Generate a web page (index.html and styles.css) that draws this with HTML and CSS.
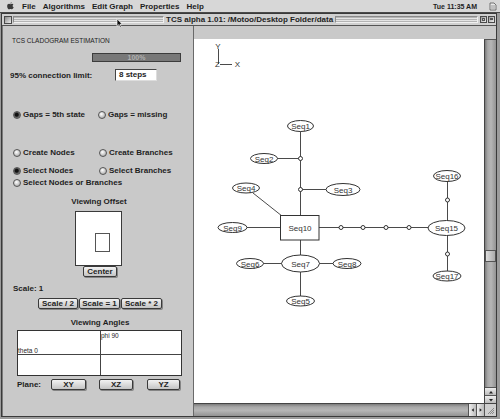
FILE: index.html
```html
<!DOCTYPE html>
<html>
<head>
<meta charset="utf-8">
<link rel="stylesheet" href="styles.css">
</head>
<body>
<div class="menubar">
  <svg class="apple" viewBox="0 0 10 12" width="7" height="8"><path d="M6.6 0.3c0 1-0.8 1.9-1.7 1.9-0.1-1 0.8-1.9 1.7-1.9z M5 3.2c0.8 0 1.4-0.5 2.3-0.5 0.8 0 1.7 0.4 2.1 1.2-1.8 1-1.5 3.5 0.3 4.1-0.4 1.2-1.4 3-2.5 3-0.9 0-1.1-0.5-2.2-0.5s-1.4 0.5-2.2 0.5C1.7 11 0 8.5 0 6.2 0 4.1 1.4 2.8 2.8 2.8c0.9 0 1.5 0.4 2.2 0.4z" fill="#3a3a3a"/></svg>
  <div class="menu">
    <span>File</span><span>Algorithms</span><span>Edit Graph</span><span>Properties</span><span>Help</span>
  </div>
  <span class="clock">Tue 11:35 AM</span>
  <svg class="appicon" viewBox="0 0 8 9" width="8" height="9"><path d="M1 1h4l2 2v5H1z" fill="#e8e8e8" stroke="#555" stroke-width="0.8"/><path d="M2 4h4M2 6h4" stroke="#777" stroke-width="0.7"/></svg>
</div>

<div class="window">
  <div class="titlebar">
    <span class="closebox"></span>
    <span class="stripes s1"></span>
    <span class="wtitle">TCS alpha 1.01: /Motoo/Desktop Folder/data</span>
    <span class="stripes s2"></span>
    <span class="tbox"><i></i></span>
    <span class="tbox shade"><i></i></span>
    <svg class="cursor" viewBox="0 0 8 12" width="7" height="10"><path d="M1 1v9l2.2-2 1.6 3.4 1.4-0.7-1.6-3.2H7.4z" fill="#111" stroke="#fff" stroke-width="0.8"/></svg>
  </div>
  <div class="content">
    <div class="panel">
      <div class="ptitle">TCS CLADOGRAM ESTIMATION</div>
      <div class="progress">100%</div>
      <div class="limit"><span class="lbl">95% connection limit:</span><span class="field">8 steps</span></div>
      <div class="radios c85 row1"><span class="opt"><i class="radio on"></i>Gaps = 5th state</span><span class="opt"><i class="radio"></i>Gaps = missing</span></div>
      <div class="radios c86 row2"><span class="opt"><i class="radio"></i>Create Nodes</span><span class="opt"><i class="radio"></i>Create Branches</span></div>
      <div class="radios c86 row3"><span class="opt"><i class="radio on"></i>Select Nodes</span><span class="opt"><i class="radio"></i>Select Branches</span></div>
      <div class="radios row4"><span class="opt"><i class="radio"></i>Select Nodes or Branches</span></div>
      <div class="label center offlbl">Viewing Offset</div>
      <div class="offset"><span class="offrect"></span></div>
      <div class="btn centerbtn">Center</div>
      <div class="label scalelbl">Scale: 1</div>
      <div class="scalerow"><span class="btn sb1">Scale / 2</span><span class="btn sb2">Scale = 1</span><span class="btn sb3">Scale * 2</span></div>
      <div class="label center anglelbl">Viewing Angles</div>
      <div class="angles">
        <div class="cell tl"><span class="theta">theta 0</span></div>
        <div class="cell tr"><span class="phi">phi 90</span></div>
        <div class="cell bl"></div>
        <div class="cell br"></div>
      </div>
      <div class="planerow"><span class="label plbl">Plane:</span><span class="btn pxy">XY</span><span class="btn pxz">XZ</span><span class="btn pyz">YZ</span></div>
    </div>
    <div class="view">
      <div class="viewtop"></div>
      <div class="viewmid">
        <div class="canvas">
          <svg class="graph" width="290" height="364" viewBox="0 0 290 364">
            <g stroke="#4a4a4a" stroke-width="1" fill="none">
              <line x1="24.5" y1="10" x2="24.5" y2="25"/>
              <line x1="26" y1="25.5" x2="38" y2="25.5"/>
              <line x1="106.5" y1="92" x2="106.5" y2="176"/>
              <line x1="83" y1="119.5" x2="106" y2="119.5"/>
              <line x1="106" y1="150.5" x2="132" y2="150.5"/>
              <line x1="59" y1="154" x2="88" y2="177"/>
              <line x1="52" y1="188.5" x2="86" y2="188.5"/>
              <line x1="125" y1="188.5" x2="234" y2="188.5"/>
              <line x1="106.5" y1="201" x2="106.5" y2="216"/>
              <line x1="69" y1="224.5" x2="88" y2="224.5"/>
              <line x1="125" y1="224.5" x2="139" y2="224.5"/>
              <line x1="106.5" y1="233" x2="106.5" y2="257"/>
              <line x1="253.5" y1="142" x2="253.5" y2="182"/>
              <line x1="253.5" y1="196" x2="253.5" y2="232"/>
            </g>
            <g stroke="#333" stroke-width="1" fill="#fff">
              <ellipse cx="106.5" cy="87" rx="13" ry="5.5"/>
              <ellipse cx="70" cy="119.5" rx="13.5" ry="5"/>
              <ellipse cx="149" cy="150.5" rx="17" ry="6"/>
              <ellipse cx="52" cy="149" rx="13.5" ry="5"/>
              <ellipse cx="38.5" cy="188.5" rx="14.5" ry="5"/>
              <ellipse cx="106.5" cy="224.5" rx="19" ry="8.5"/>
              <ellipse cx="56" cy="224.5" rx="13.5" ry="5"/>
              <ellipse cx="153" cy="224.5" rx="14" ry="5"/>
              <ellipse cx="106.5" cy="262" rx="14" ry="5"/>
              <ellipse cx="252.5" cy="189" rx="18.5" ry="7.5"/>
              <ellipse cx="253" cy="137" rx="13.5" ry="5.5"/>
              <ellipse cx="253" cy="237" rx="14" ry="5"/>
              <rect x="86.5" y="176.5" width="38.5" height="24.5"/>
              <circle cx="106.5" cy="119.5" r="2"/>
              <circle cx="106.5" cy="150.5" r="2"/>
              <circle cx="147" cy="188.5" r="2"/>
              <circle cx="169" cy="188.5" r="2"/>
              <circle cx="192" cy="188.5" r="2"/>
              <circle cx="215" cy="188.5" r="2"/>
              <circle cx="253.5" cy="161" r="2"/>
              <circle cx="253.5" cy="215" r="2"/>
            </g>
            <g class="gtext" text-anchor="middle">
              <text x="24" y="10">Y</text>
              <text x="23.5" y="28">Z</text>
              <text x="43.5" y="28">X</text>
              <text x="106.5" y="90">Seq1</text>
              <text x="70" y="122.5">Seq2</text>
              <text x="149" y="153.5">Seq3</text>
              <text x="52" y="152">Seq4</text>
              <text x="38.5" y="191.5">Seq9</text>
              <text x="106" y="191.5">Seq10</text>
              <text x="106.5" y="227.5">Seq7</text>
              <text x="56" y="227.5">Seq6</text>
              <text x="153" y="227.5">Seq8</text>
              <text x="106.5" y="265">Seq5</text>
              <text x="252.5" y="192">Seq15</text>
              <text x="253" y="140">Seq16</text>
              <text x="253" y="240">Seq17</text>
            </g>
          </svg>
        </div>
        <div class="vscroll">
          <div class="vtrack"><span class="thumb"></span></div>
          <span class="arrow"><svg viewBox="0 0 8 8" width="8" height="8"><path d="M2 5.5h4L4 3z" fill="#222"/></svg></span>
          <span class="arrow"><svg viewBox="0 0 8 8" width="8" height="8"><path d="M2 3h4L4 5.5z" fill="#222"/></svg></span>
        </div>
      </div>
      <div class="hscroll">
        <div class="htrack"></div>
        <span class="arrow"><svg viewBox="0 0 8 8" width="8" height="8"><path d="M5.5 2v4L3 4z" fill="#222"/></svg></span>
        <span class="arrow"><svg viewBox="0 0 8 8" width="8" height="8"><path d="M3 2v4L5.5 4z" fill="#222"/></svg></span>
        <span class="resize"><svg viewBox="0 0 11 11" width="11" height="11"><path d="M3 9L9 3M5 9L9 5M7 9L9 7" stroke="#777" stroke-width="0.8"/></svg></span>
      </div>
    </div>
  </div>
</div>
</body>
</html>
```
FILE: styles.css
```css
* { box-sizing: border-box; }
body {
  margin: 0;
  width: 500px;
  height: 419px;
  overflow: hidden;
  background: #9c9c9c;
  font-family: "Liberation Sans", Arial, sans-serif;
  color: #1e1e1e;
}
.menubar {
  height: 13px;
  border-bottom: 1px solid #4a4a4a;
  background: #d7d7d7;
  display: flex;
  align-items: center;
  font-size: 8px;
  font-weight: bold;
}
.apple { margin-left: 7px; flex: none; }
.menu { display: flex; gap: 7px; margin-left: 8px; }
.clock { margin-left: auto; font-size: 7px; }
.appicon { margin-left: 12px; margin-right: 3px; }

.window {
  margin-left: 1px;
  width: 496px;
  height: 404px;
  border: 1px solid #3a3a3a;
  background: #c9c9c9;
}
.titlebar {
  height: 12px;
  border-bottom: 1px solid #555;
  display: flex;
  align-items: center;
  background: #d0d0d0;
  font-size: 8px;
  font-weight: bold;
  position: relative;
}
.closebox {
  width: 8px; height: 8px;
  margin-left: 2px;
  border: 1px solid #4a4a4a;
  background: linear-gradient(135deg, #8a8a8a, #ededed);
  flex: none;
}
.stripes {
  height: 7px;
  border-top: 1px solid #8a8a8a;
  border-bottom: 1px solid #f0f0f0;
  border-left: 1px solid #8a8a8a;
  border-right: 1px solid #f0f0f0;
  background: repeating-linear-gradient(#b4b4b4 0 1px, #e4e4e4 1px 2px);
}
.s1 { width: 151px; margin-left: 1px; flex: none; }
.wtitle { margin-left: 2px; white-space: nowrap; }
.s2 { flex: 1; margin-left: 2px; margin-right: 2px; }
.tbox {
  width: 7px; height: 7px;
  border: 1px solid #4a4a4a;
  background: linear-gradient(135deg, #9a9a9a, #eee);
  margin-right: 1px;
  flex: none;
  display: flex;
  padding: 1px;
}
.tbox i { display: block; width: 3px; height: 3px; border: 1px solid #555; }
.tbox.shade i { width: 5px; height: 2px; }
.cursor { position: absolute; left: 114px; top: 4px; }

.content { display: flex; height: 390px; }
.panel {
  width: 191px;
  flex: none;
  border-left: 1px solid #7a7a7a;
  padding-top: 10px;
  font-size: 8px;
  font-weight: bold;
}
.ptitle {
  height: 9px; line-height: 9px;
  font-size: 6.5px; font-weight: normal;
  margin-left: 9px;
  color: #222;
}
.progress {
  margin: 8px 0 0 89px;
  width: 89px; height: 9px;
  background: #787878;
  border: 1px solid #3c3c3c;
  color: #b0b0b0;
  font-size: 7px;
  text-align: center;
  line-height: 7px;
}
.limit {
  margin-top: 7px;
  height: 12px;
  display: flex;
  align-items: center;
  padding-left: 7px;
}
.lbl { width: 105px; }
.field {
  width: 42px; height: 12px;
  background: #fff;
  border: 1px solid #444;
  border-right-color: #ddd;
  border-bottom-color: #ddd;
  padding-left: 3px;
  line-height: 10px;
}
.radios {
  display: grid;
  padding-left: 10px;
  height: 9px;
  align-items: center;
}
.c85 { grid-template-columns: 85px auto; }
.c86 { grid-template-columns: 86px auto; }
.row1 { margin-top: 29px; }
.row2 { margin-top: 29px; }
.row3 { margin-top: 9px; }
.row4 { margin-top: 3px; }
.opt { display: flex; align-items: center; gap: 2px; white-space: nowrap; height: 9px; }
.radio {
  width: 8px; height: 8px;
  border-radius: 50%;
  border: 1px solid #555;
  background: radial-gradient(circle at 40% 35%, #ffffff, #b8b8b8 70%, #8c8c8c);
  flex: none;
}
.radio.on { background: radial-gradient(circle at 45% 45%, #111 0 1.5px, #5a5a5a 2.5px, #9a9a9a); }
.label { height: 9px; line-height: 9px; }
.center { text-align: center; }
.offlbl { margin-top: 10px; padding-left: 2px; }
.offset {
  margin: 5px auto 0 72px;
  width: 47px; height: 55px;
  background: #fff;
  border: 1px solid #3a3a3a;
  padding: 21px 0 0 19px;
}
.offrect { display: block; width: 15px; height: 19px; border: 1px solid #555; }
.btn {
  height: 11px;
  border: 1px solid #3a3a3a;
  border-radius: 2px;
  background: linear-gradient(#f2f2f2, #c4c4c4);
  box-shadow: 1px 1px 0 #858585;
  display: flex;
  align-items: center;
  justify-content: center;
  font-size: 8px;
  font-weight: bold;
  white-space: nowrap;
}
.centerbtn { width: 34px; margin: 0 0 0 80px; }
.scalelbl { margin-top: 7px; padding-left: 10px; }
.scalerow { margin-top: 5px; display: flex; gap: 1px; padding-left: 35px; }
.sb1 { width: 40px; }
.sb2 { width: 41px; }
.sb3 { width: 41px; }
.anglelbl { margin-top: 9px; padding-left: 4px; }
.angles {
  margin: 3px 0 0 14px;
  width: 165px; height: 46px;
  border: 1px solid #333;
  background: #fff;
  display: grid;
  grid-template-columns: 83px 1fr;
  grid-template-rows: 24px 1fr;
  font-size: 6.5px;
  font-weight: normal;
}
.cell { position: relative; }
.tl { border-right: 1px solid #444; border-bottom: 1px solid #444; display: flex; align-items: flex-end; }
.tr { border-bottom: 1px solid #444; }
.bl { border-right: 1px solid #444; }
.theta { line-height: 7px; margin-bottom: 0; }
.phi { display: block; line-height: 7px; margin-top: 1px; }
.planerow { margin-top: 3px; height: 11px; display: flex; align-items: center; padding-left: 14px; }
.plbl { width: 34px; }
.pxy { width: 35px; }
.pxz { width: 34px; margin-left: 13px; }
.pyz { width: 33px; margin-left: 14px; }

.view {
  flex: 1;
  border-left: 1px solid #6a6a6a;
  display: flex;
  flex-direction: column;
}
.viewtop { height: 13px; }
.viewmid { height: 364px; display: flex; }
.canvas { width: 290px; height: 364px; background: #fff; }
.graph { display: block; }
.gtext { font-family: "Liberation Sans", Arial, sans-serif; font-size: 8px; fill: #333; }
.vscroll {
  width: 12px;
  display: flex;
  flex-direction: column;
  border-left: 1px solid #444;
  border-top: 1px solid #555;
}
.vtrack {
  flex: 1;
  background: linear-gradient(to right, #7c7c7c, #a8a8a8 25%, #b6b6b6 55%, #939393);
}
.thumb {
  display: block;
  margin-top: 210px;
  height: 12px;
  border: 1px solid #555;
  background: linear-gradient(to right, #ddd, #aaa);
}
.arrow {
  width: 11px; height: 8px;
  flex: none;
  border-top: 1px solid #555;
  background: linear-gradient(#eee, #bbb);
  display: flex;
  align-items: center;
  justify-content: center;
}
.hscroll {
  height: 13px;
  display: flex;
  border-top: 1px solid #444;
}
.htrack {
  flex: 1;
  background: linear-gradient(#7c7c7c, #a8a8a8 25%, #b6b6b6 55%, #939393);
}
.hscroll .arrow {
  width: 8px; height: 12px;
  border-top: none;
  border-left: 1px solid #555;
  background: linear-gradient(to right, #eee, #bbb);
}
.resize {
  width: 12px;
  border-left: 1px solid #555;
  background: #cfcfcf;
  display: flex;
  align-items: center;
  justify-content: center;
}
```
